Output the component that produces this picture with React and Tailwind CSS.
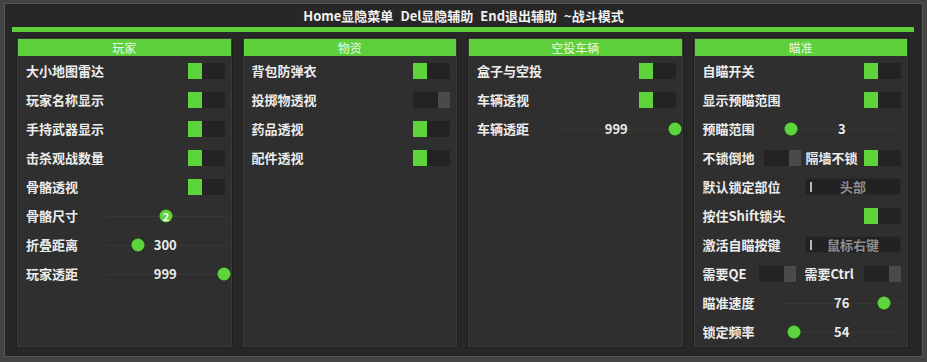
const font = { fontFamily: '"Noto Sans CJK SC", "Noto Sans", sans-serif' }

function Toggle({ on }) {
  return (
    <div className={`flex h-[16px] w-[37px] shrink-0 bg-[#232323] ${on ? '' : 'justify-end'}`}>
      {on ? (
        <div className="h-full w-[14px] bg-[#5dd33c]" />
      ) : (
        <div className="h-full w-[12px] bg-[#4a4a4a]" />
      )}
    </div>
  )
}

function Slider({ value, knob, inKnob }) {
  return (
    <div className="relative ml-[8px] h-full flex-1">
      <div className="absolute left-0 right-0 top-1/2 h-px bg-[#383838]" />
      {!inKnob && (
        <div className="absolute inset-0 flex items-center justify-center text-[13px] font-bold text-[#ececec]">
          {value}
        </div>
      )}
      <div
        className={`absolute top-1/2 flex h-[13px] w-[13px] -translate-x-1/2 -translate-y-1/2 items-center justify-center rounded-full bg-[#5dd33c] text-[11px] font-bold leading-none text-white shadow-[0_0_2px_#1a3a10] ${knob}`}
      >
        {inKnob ? value : null}
      </div>
    </div>
  )
}

function Row({ children }) {
  return <div className="flex h-[29px] items-center pl-[8px] pr-[6px]">{children}</div>
}

function Label({ children, w }) {
  return <span className={`shrink-0 text-[13px] font-bold text-[#ececec] ${w || ''}`}>{children}</span>
}

function ToggleRow({ label, on }) {
  return (
    <Row>
      <Label>{label}</Label>
      <div className="flex-1" />
      <Toggle on={on} />
    </Row>
  )
}

function SliderRow({ label, value, knob, inKnob }) {
  return (
    <Row>
      <Label w="w-[72px]">{label}</Label>
      <Slider value={value} knob={knob} inKnob={inKnob} />
    </Row>
  )
}

function Combo({ text }) {
  return (
    <div className="relative ml-auto flex h-[17px] w-[96px] items-center justify-center border border-[#2a2a2a] bg-[#222]">
      <div className="absolute left-[4px] top-[3px] h-[10px] w-[2px] bg-[#b8b8b8]" />
      <span className="text-[13px] font-bold text-[#8e8e8e]">{text}</span>
    </div>
  )
}

function Panel({ title, children }) {
  return (
    <div className="flex flex-col border border-[#3b3b3b] bg-[#2f2f2f] shadow-[0_0_0_1px_#1f1f1f]">
      <div className="flex h-[17px] items-center justify-center bg-[#5ccf3b] text-[12px] leading-none text-[#eaf8e2]">
        {title}
      </div>
      {children}
    </div>
  )
}

export default function App() {
  return (
    <div className="h-[362px] w-[927px] bg-[#444] px-[4px] pb-[5px] pt-[3px]" style={font}>
      <div className="flex h-full flex-col border border-[#555] bg-[#272727]">
        <div className="flex h-[23px] items-center justify-center gap-[7px] text-[13px] font-bold text-[#f2f2f2]">
          <span>Home显隐菜单</span>
          <span>Del显隐辅助</span>
          <span>End退出辅助</span>
          <span>~战斗模式</span>
        </div>
        <div className="ml-[7px] mr-[8px] h-[5px] bg-[#5ccf3b]" />
        <div className="mt-[6px] grid h-[307px] grid-cols-4 gap-[11px] pl-[12px] pr-[14px]">
          <Panel title="玩家">
            <ToggleRow label="大小地图雷达" on />
            <ToggleRow label="玩家名称显示" on />
            <ToggleRow label="手持武器显示" on />
            <ToggleRow label="击杀观战数量" on />
            <ToggleRow label="骨骼透视" on />
            <SliderRow label="骨骼尺寸" value="2" knob="left-[60px]" inKnob />
            <SliderRow label="折叠距离" value="300" knob="left-[32px]" />
            <SliderRow label="玩家透距" value="999" knob="left-[118px]" />
          </Panel>
          <Panel title="物资">
            <ToggleRow label="背包防弹衣" on />
            <ToggleRow label="投掷物透视" />
            <ToggleRow label="药品透视" on />
            <ToggleRow label="配件透视" on />
          </Panel>
          <Panel title="空投车辆">
            <ToggleRow label="盒子与空投" on />
            <ToggleRow label="车辆透视" on />
            <SliderRow label="车辆透距" value="999" knob="left-[118px]" />
          </Panel>
          <Panel title="瞄准">
            <ToggleRow label="自瞄开关" on />
            <ToggleRow label="显示预瞄范围" on />
            <SliderRow label="预瞄范围" value="3" knob="left-[8px]" />
            <Row>
              <Label w="w-[61px]">不锁倒地</Label>
              <Toggle />
              <span className="ml-[5px] text-[13px] font-bold text-[#ececec]">隔墙不锁</span>
              <div className="flex-1" />
              <Toggle on />
            </Row>
            <Row>
              <Label>默认锁定部位</Label>
              <Combo text="头部" />
            </Row>
            <ToggleRow label="按住Shift锁头" on />
            <Row>
              <Label>激活自瞄按键</Label>
              <Combo text="鼠标右键" />
            </Row>
            <Row>
              <Label w="w-[56px]">需要QE</Label>
              <Toggle />
              <span className="ml-[9px] text-[13px] font-bold text-[#ececec]">需要Ctrl</span>
              <div className="flex-1" />
              <Toggle />
            </Row>
            <SliderRow label="瞄准速度" value="76" knob="left-[101px]" />
            <SliderRow label="锁定频率" value="54" knob="left-[11px]" />
          </Panel>
        </div>
      </div>
    </div>
  )
}
